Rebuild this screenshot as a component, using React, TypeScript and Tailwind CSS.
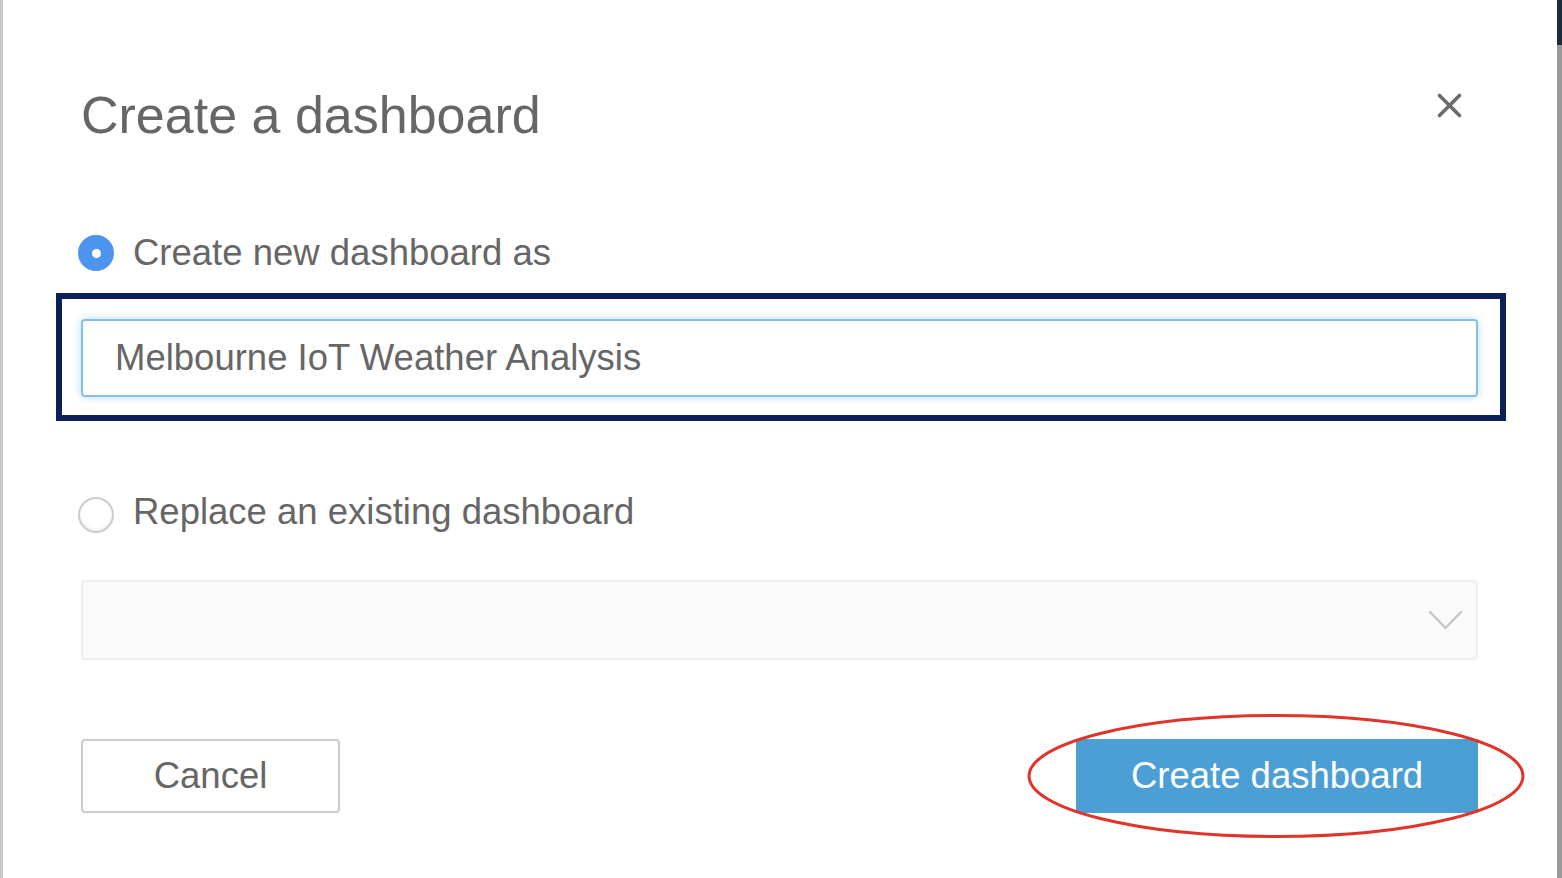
const FONT = "font-['Liberation_Sans',Arial,sans-serif]";

function Radio({ checked }: { checked?: boolean }) {
  if (checked) {
    return (
      <div className="w-[36px] h-[36px] rounded-full bg-[#4d94ee] flex items-center justify-center shrink-0">
        <div className="w-[9px] h-[9px] rounded-full bg-white" />
      </div>
    );
  }
  return (
    <div className="w-[36px] h-[36px] rounded-full border-2 border-[#cdcdcd] bg-white shadow-[inset_0_-2px_2px_rgba(0,0,0,0.06)] shrink-0" />
  );
}

export default function App() {
  return (
    <div className={`flex h-[878px] w-full bg-white overflow-hidden ${FONT}`}>
      {/* left edge of the dialog */}
      <div className="w-[3px] bg-[#c9c9c9]" />

      <div className="flex-1 flex flex-col pl-[78px] pr-[79px] pt-[85px]">
        {/* Header */}
        <div className="flex items-start justify-between">
          <h1 className="text-[52px] leading-[60px] text-[#666666] font-normal">Create a dashboard</h1>
          <button className="mt-[8px] mr-[16px] w-[25px] h-[25px]">
            <svg width="25" height="25" viewBox="0 0 25 25" fill="none">
              <path d="M2.5 2.5L22.5 22.5M22.5 2.5L2.5 22.5" stroke="#6b6b6b" strokeWidth="3.6" strokeLinecap="round" />
            </svg>
          </button>
        </div>

        {/* Option 1 */}
        <div className="mt-[86px] h-[44px] flex items-center gap-[19px] ml-[-3px]">
          <Radio checked />
          <span className="text-[36.5px] leading-[44px] text-[#666666]">Create new dashboard as</span>
        </div>

        {/* highlighted input */}
        <div className="mt-[18px] ml-[-25px] mr-[-28px] border-[6px] border-[#0a2058] pt-[20px] pb-[18px] pl-[19px] pr-[22px]">
          <div className="h-[78px] border-2 border-[#82bfe9] rounded-[4px] shadow-[0_0_9px_rgba(102,175,233,0.45)] flex items-center pl-[32px]">
            <span className="text-[36.5px] leading-[44px] text-[#666666]">Melbourne IoT Weather Analysis</span>
          </div>
        </div>

        {/* Option 2 */}
        <div className="mt-[69px] h-[44px] flex items-center gap-[19px] ml-[-3px]">
          <div className="mt-[5px]">
            <Radio />
          </div>
          <span className="text-[36.5px] leading-[44px] text-[#666666]">Replace an existing dashboard</span>
        </div>

        {/* disabled select */}
        <div className="mt-[46px] h-[80px] bg-[#fafafa] border-2 border-[#eeeeee] rounded-[4px] flex items-center justify-end pr-[13px]">
          <svg width="35" height="21" viewBox="0 0 35 21" fill="none">
            <path d="M2 2L17.5 18L33 2" stroke="#c6c6c6" strokeWidth="2.5" strokeLinecap="round" strokeLinejoin="round" />
          </svg>
        </div>

        {/* Footer */}
        <div className="mt-[79px] flex items-center justify-between">
          <button className="w-[259px] h-[74px] border-2 border-[#cccccc] rounded-[4px] bg-white text-[36.5px] text-[#666666]">
            Cancel
          </button>
          <div className="relative">
            <button className="w-[402px] h-[74px] bg-[#4c9fd4] text-white text-[36.5px]">Create dashboard</button>
            <svg
              className="absolute left-[-49px] top-[-25px] pointer-events-none"
              width="498"
              height="124"
              viewBox="0 0 498 124"
              fill="none"
            >
              <ellipse cx="249" cy="62" rx="247" ry="60.5" stroke="#e0342b" strokeWidth="3" />
            </svg>
          </div>
        </div>
      </div>

      {/* right edge */}
      <div className="w-[5px] flex flex-col">
        <div className="h-[45px] bg-[#1d2b3a]" />
        <div className="flex-1 bg-[#9a9a9a]" />
      </div>
    </div>
  );
}
